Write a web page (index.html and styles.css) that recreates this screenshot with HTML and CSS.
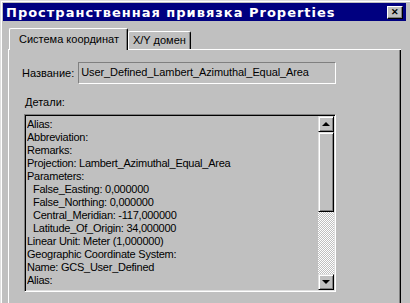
FILE: index.html
```html
<!DOCTYPE html>
<html lang="ru">
<head>
  <meta charset="UTF-8" />
  <title>Пространственная привязка Properties</title>
  <link rel="stylesheet" href="styles.css">
</head>
<body>
  <div class="window">
    <div class="titlebar">
      <span class="title">Пространственная привязка Properties</span>
      <span class="close">&#x2715;</span>
    </div>
    <div class="dialog">
      <div class="tabs">
        <div class="tab active">Система координат</div>
        <div class="tab">X/Y домен</div>
      </div>
      <div class="panel">
        <div class="name-row">
          <span class="label">Название:</span>
          <div class="field">User_Defined_Lambert_Azimuthal_Equal_Area</div>
        </div>
        <div class="details-label">Детали:</div>
        <div class="details">
          <div class="lines">
            <div>Alias:</div>
            <div>Abbreviation:</div>
            <div>Remarks:</div>
            <div>Projection: Lambert_Azimuthal_Equal_Area</div>
            <div>Parameters:</div>
            <div class="indent">False_Easting: 0,000000</div>
            <div class="indent">False_Northing: 0,000000</div>
            <div class="indent">Central_Meridian: -117,000000</div>
            <div class="indent">Latitude_Of_Origin: 34,000000</div>
            <div>Linear Unit: Meter (1,000000)</div>
            <div>Geographic Coordinate System:</div>
            <div>Name: GCS_User_Defined</div>
            <div>Alias:</div>
          </div>
          <div class="scrollbar">
            <div class="sb-btn"><span class="arrow-up"></span></div>
            <div class="sb-thumb"></div>
            <div class="sb-track"></div>
            <div class="sb-btn"><span class="arrow-down"></span></div>
          </div>
        </div>
      </div>
    </div>
  </div>
</body>
</html>
```

FILE: styles.css
```css
html, body {
  margin: 0;
  width: 410px;
  height: 303px;
  overflow: hidden;
  background: #c0c0c0;
}
body {
  font-family: 'Liberation Sans', Arial, sans-serif;
  font-size: 11px;
  color: #000;
}
.window {
  box-sizing: border-box;
  width: 410px;
  height: 303px;
  padding: 3px 4px 0 3px;
  border-left: 1px solid #dfdfdf;
  border-top: 1px solid #dfdfdf;
  box-shadow: inset 1px 1px 0 #fff;
}
.titlebar {
  display: flex;
  align-items: center;
  justify-content: space-between;
  height: 18px;
  margin-top: -1px;
  margin-left: -1px;
  background: #000080;
  padding: 0 2px 0 3px;
}
.title {
  color: #fff;
  font-family: 'DejaVu Sans', Verdana, sans-serif;
  font-weight: bold;
  font-size: 13px;
  letter-spacing: 1px;
}
.close {
  box-sizing: border-box;
  width: 16px;
  height: 13px;
  margin-right: 1px;
  background: #c0c0c0;
  border-left: 1px solid #fff;
  border-top: 1px solid #fff;
  border-right: 1px solid #000;
  border-bottom: 1px solid #000;
  box-shadow: inset -1px -1px 0 #808080;
  font-size: 9px;
  font-weight: bold;
  line-height: 11px;
  text-align: center;
}
.dialog {
  padding: 7px 5px 0 4px;
}
.tabs {
  display: flex;
  align-items: flex-end;
  height: 21px;
  border-bottom: 1px solid #fff;
  padding-left: 1px;
}
.tab {
  box-sizing: border-box;
  height: 18px;
  padding: 0 4px;
  line-height: 17px;
  background: #c0c0c0;
  border-left: 1px solid #fff;
  border-top: 1px solid #fff;
  border-right: 1px solid #000;
  border-radius: 2px 2px 0 0;
  box-shadow: inset -1px 0 0 #808080;
}
.tab.active {
  height: 22px;
  margin-bottom: -1px;
  padding: 0 8px 0 9px;
  line-height: 20px;
}
.panel {
  box-sizing: border-box;
  height: 260px;
  border-left: 1px solid #fff;
  border-right: 1px solid #000;
  box-shadow: inset -1px 0 0 #808080;
  padding: 12px 64px 0 13px;
}
.name-row {
  display: flex;
  align-items: center;
  gap: 4px;
}
.field {
  flex: 1;
  box-sizing: border-box;
  height: 22px;
  line-height: 18px;
  padding-left: 2px;
  border-left: 1px solid #808080;
  border-top: 1px solid #808080;
  border-right: 1px solid #fff;
  border-bottom: 1px solid #fff;
  box-shadow: inset 1px 1px 0 #c0c0c0;
  letter-spacing: -0.1px;
}
.details-label {
  margin: 12px 0 0 3px;
  height: 18px;
}
.details {
  display: flex;
  box-sizing: border-box;
  height: 178px;
  margin-left: 2px;
  border-left: 1px solid #808080;
  border-top: 1px solid #808080;
  border-right: 1px solid #fff;
  border-bottom: 1px solid #fff;
  box-shadow: inset 1px 1px 0 #000, inset -1px -1px 0 #dfdfdf;
  padding: 1px 1px 1px 2px;
}
.lines {
  flex: 1;
  line-height: 13px;
  padding-top: 2px;
  white-space: nowrap;
  overflow: hidden;
  letter-spacing: -0.25px;
}
.indent {
  padding-left: 6px;
}
.scrollbar {
  display: flex;
  flex-direction: column;
  width: 16px;
}
.sb-btn, .sb-thumb {
  box-sizing: border-box;
  background: #c0c0c0;
  border-left: 1px solid #dfdfdf;
  border-top: 1px solid #dfdfdf;
  border-right: 1px solid #000;
  border-bottom: 1px solid #000;
  box-shadow: inset 1px 1px 0 #fff, inset -1px -1px 0 #808080;
}
.sb-btn {
  height: 16px;
  display: flex;
  align-items: center;
  justify-content: center;
}
.sb-thumb {
  height: 80px;
}
.sb-track {
  flex: 1;
  background-color: #fff;
  background-image:
    linear-gradient(45deg, #c0c0c0 25%, transparent 25%, transparent 75%, #c0c0c0 75%),
    linear-gradient(45deg, #c0c0c0 25%, transparent 25%, transparent 75%, #c0c0c0 75%);
  background-size: 2px 2px;
  background-position: 0 0, 1px 1px;
}
.arrow-up, .arrow-down {
  width: 0;
  height: 0;
  border-left: 4px solid transparent;
  border-right: 4px solid transparent;
}
.arrow-up {
  border-bottom: 4px solid #000;
}
.arrow-down {
  border-top: 4px solid #000;
}
```
